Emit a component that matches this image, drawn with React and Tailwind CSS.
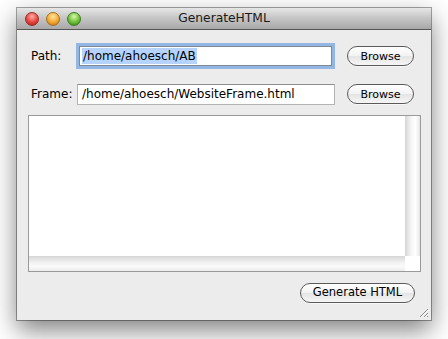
import React from 'react';

const font = "font-['Lucida_Grande','DejaVu_Sans',sans-serif]";

const Light = ({ color }) => (
  <div className={`w-[14px] h-[14px] rounded-full ${color}`} />
);

const AquaButton = ({ children, className = '' }) => (
  <button
    className={`h-[20px] rounded-full border border-[#5a5a5a] bg-[linear-gradient(#ffffff,#f2f2f2_50%,#e4e4e4_51%,#f6f6f6)] text-black leading-none shadow-[0_1px_0_rgba(255,255,255,0.6)] ${className}`}
  >
    {children}
  </button>
);

const App = () => {
  return (
    <div className={`w-[448px] h-[339px] bg-white pt-[8px] pl-[17px] ${font}`}>
      <div className="w-[414px] h-[312px] bg-[#ececec] shadow-[0_0_0_1px_rgba(0,0,0,0.35),0_10px_24px_rgba(0,0,0,0.5)] flex flex-col">
        {/* Title bar */}
        <div className="relative h-[22px] flex items-center pl-[8px] bg-[linear-gradient(#e6e6e6,#c4c4c4_50%,#a8a8a8)] border-b border-[#555555]">
          <div className="flex gap-[7px]">
            <Light color="bg-[radial-gradient(circle_at_50%_30%,#ffb0aa,#e8423c_55%,#a8201c)] border border-[#9a2b26]" />
            <Light color="bg-[radial-gradient(circle_at_50%_30%,#ffe6a0,#f4a830_55%,#b86a10)] border border-[#a8701a]" />
            <Light color="bg-[radial-gradient(circle_at_50%_30%,#d8f7a8,#6cc13a_55%,#327a14)] border border-[#3f7c20]" />
          </div>
          <div className="absolute inset-0 flex items-center justify-center text-[12.3px] text-[#1a1a1a]">
            GenerateHTML
          </div>
        </div>

        {/* Body */}
        <div className="flex-1 flex flex-col pl-[11px] pr-[10px]">
          {/* Path row */}
          <div className="mt-[14px] h-[24px] flex items-center">
            <span className="ml-[3px] w-[48px] text-[12px] text-black">Path:</span>
            <div className="w-[253px] h-[20px] bg-white border border-[#7d8a9a] shadow-[0_0_0_3px_#93b6e2] flex items-center pl-[2px]">
              <span className="bg-[#b5d3fd] text-[12px] leading-[16px] text-black px-[1px]">/home/ahoesch/AB</span>
            </div>
            <AquaButton className="ml-[15px] w-[67px] text-[11px]">Browse</AquaButton>
          </div>

          {/* Frame row */}
          <div className="mt-[15px] h-[22px] flex items-center">
            <span className="ml-[3px] w-[46px] text-[12px] text-black">Frame:</span>
            <div className="w-[258px] h-[21px] bg-white border border-[#b4b4b4] border-t-[#8e8e8e] flex items-center pl-[4px] text-[12px] text-black">
              /home/ahoesch/WebsiteFrame.html
            </div>
            <AquaButton className="ml-[12px] w-[67px] text-[11px]">Browse</AquaButton>
          </div>

          {/* Output area */}
          <div className="mt-[10px] w-[393px] h-[157px] border border-[#9a9a9a] bg-white grid grid-cols-[1fr_15px] grid-rows-[1fr_15px]">
            <div className="bg-white" />
            <div className="bg-[linear-gradient(to_right,#d6d6d6,#f4f4f4_40%,#ffffff_70%,#e6e6e6)]" />
            <div className="bg-[linear-gradient(#d6d6d6,#f2f2f2_45%,#fafafa_70%,#ececec)]" />
            <div className="bg-white" />
          </div>

          {/* Generate button */}
          <div className="mt-[11px] flex justify-end pr-[6px]">
            <AquaButton className="w-[115px] text-[11.5px]">Generate HTML</AquaButton>
          </div>

          {/* Resize grip */}
          <div className="mt-auto mb-[2px] -mr-[8px] flex justify-end">
            <svg width="11" height="11" viewBox="0 0 11 11">
              <path d="M10 2 L2 10 M10 6 L6 10 M10 9 L9 10" stroke="#8a8a8a" strokeWidth="1" />
              <path d="M10.7 2.7 L2.7 10.7 M10.7 6.7 L6.7 10.7" stroke="#ffffff" strokeWidth="0.8" />
            </svg>
          </div>
        </div>
      </div>
    </div>
  );
};

export default App;
